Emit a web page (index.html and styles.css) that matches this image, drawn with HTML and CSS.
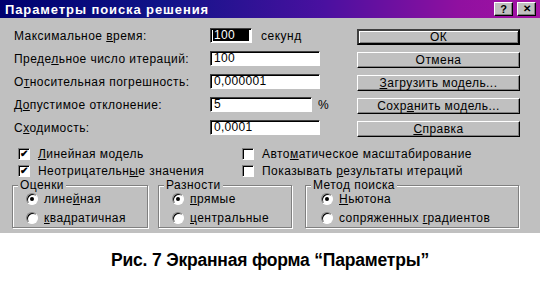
FILE: index.html
```html
<!DOCTYPE html>
<html lang="ru">
<head>
<meta charset="utf-8">
<title>Параметры поиска решения</title>
<link rel="stylesheet" href="styles.css">
</head>
<body>
<div class="dialog">
  <div class="titlebar">
    <span class="title">Параметры поиска решения</span>
    <div class="tbtns">
      <span class="tbtn">?</span>
      <span class="tbtn close">✕</span>
    </div>
  </div>
  <div class="content">
    <div class="top">
      <div class="fields">
        <div class="row">
          <span class="label">Максимальное <u>в</u>ремя:</span>
          <span class="input short sel"><span class="seltext">100</span></span>
          <span class="unit">секунд</span>
        </div>
        <div class="row">
          <span class="label">Преде<u>л</u>ьное число итераций:</span>
          <span class="input">100</span>
        </div>
        <div class="row">
          <span class="label">О<u>т</u>носительная погрешность:</span>
          <span class="input">0,000001</span>
        </div>
        <div class="row">
          <span class="label">Д<u>о</u>пустимое отклонение:</span>
          <span class="input mid">5</span>
          <span class="unit pct">%</span>
        </div>
        <div class="row">
          <span class="label">С<u>х</u>одимость:</span>
          <span class="input">0,0001</span>
        </div>
      </div>
      <div class="buttons">
        <span class="btn default">ОК</span>
        <span class="btn">Отмена</span>
        <span class="btn"><u>З</u>агрузить модель...</span>
        <span class="btn">Сохр<u>а</u>нить модель...</span>
        <span class="btn"><u>С</u>правка</span>
      </div>
    </div>
    <div class="checks">
      <div class="check"><span class="box on">✔</span><span><u>Л</u>инейная модель</span></div>
      <div class="check"><span class="box"></span><span>Авто<u>м</u>атическое масштабирование</span></div>
      <div class="check"><span class="box on">✔</span><span>Неотрицательн<u>ы</u>е значения</span></div>
      <div class="check"><span class="box"></span><span>Показывать <u>р</u>езультаты итераций</span></div>
    </div>
    <div class="groups">
      <div class="group g1">
        <span class="legend">Оценки</span>
        <div class="radio"><span class="dot on"></span><span>лине<u>й</u>ная</span></div>
        <div class="radio"><span class="dot"></span><span><u>к</u>вадратичная</span></div>
      </div>
      <div class="group g2">
        <span class="legend">Разности</span>
        <div class="radio"><span class="dot on"></span><span><u>п</u>рямые</span></div>
        <div class="radio"><span class="dot"></span><span><u>ц</u>ентральные</span></div>
      </div>
      <div class="group g3">
        <span class="legend">Метод поиска</span>
        <div class="radio"><span class="dot on"></span><span><u>Н</u>ьютона</span></div>
        <div class="radio"><span class="dot"></span><span>сопряженных <u>г</u>радиентов</span></div>
      </div>
    </div>
  </div>
</div>
<div class="caption">Рис. 7 Экранная форма “Параметры”</div>
</body>
</html>
```
FILE: styles.css
```css
* { box-sizing: border-box; }
html, body { margin: 0; padding: 0; background: #fff; }
body {
  width: 540px;
  height: 288px;
  overflow: hidden;
  font-family: "Liberation Sans", Arial, sans-serif;
  font-size: 12px;
  color: #000;
}
u { text-decoration: underline; text-underline-offset: 1px; }

.dialog {
  width: 540px;
  height: 233px;
  background: #c0c0c0;
  display: flex;
  flex-direction: column;
}

.titlebar {
  height: 18px;
  background: linear-gradient(90deg, #00006e 0%, #101488 30%, #4a10a0 60%, #9010a0 85%, #a412a4 100%);
  display: flex;
  align-items: center;
  justify-content: space-between;
  padding: 0 4px 0 5px;
}
.title {
  color: #fff;
  font-weight: bold;
  font-size: 13px;
  letter-spacing: 0.9px;
}
.tbtns { display: flex; gap: 4px; }
.tbtn {
  width: 19px;
  height: 14px;
  background: #c0c0c0;
  border: 1px solid;
  border-color: #fff #000 #000 #fff;
  box-shadow: inset -1px -1px 0 #808080;
  font-size: 11px;
  font-weight: bold;
  line-height: 12px;
  text-align: center;
}
.tbtn.close { font-size: 10px; }

.content {
  padding: 10px 20px 0 14px;
  display: flex;
  flex-direction: column;
}

.top { display: flex; justify-content: space-between; }
.fields { display: flex; flex-direction: column; gap: 8px; }
.row { display: flex; align-items: center; height: 15px; }
.label { width: 196px; letter-spacing: 0.45px; }
.input {
  width: 110px;
  height: 15px;
  background: #fff;
  border: 1px solid;
  border-color: #404040 #fff #fff #404040;
  box-shadow: inset 1px 1px 0 #000;
  padding: 0 3px;
  line-height: 13px;
  letter-spacing: 0.3px;
}
.input.short { width: 42px; }
.input.mid { width: 102px; }
.input.sel { padding: 1px 2px; }
.seltext { display: block; background: #000; color: #fff; line-height: 11px; height: 11px; padding: 0 1px; letter-spacing: 0.3px; }
.unit { margin-left: 9px; letter-spacing: 0.5px; }
.unit.pct { margin-left: 6px; }

.buttons { display: flex; flex-direction: column; gap: 7px; padding-top: 1px; }
.btn {
  width: 163px;
  height: 16px;
  border: 1px solid;
  border-color: #fff #000 #000 #fff;
  box-shadow: inset -1px -1px 0 #808080;
  text-align: center;
  line-height: 14px;
  letter-spacing: 0.45px;
}
.btn.default {
  border: 2px solid #000;
  border-top-color: #404040;
  border-left-color: #404040;
  box-shadow: inset 1px 1px 0 #fff, inset -1px -1px 0 #808080;
  line-height: 12px;
}

.checks {
  display: grid;
  grid-template-columns: 224px 1fr;
  row-gap: 5px;
  padding: 11px 0 0 4px;
}
.check { display: flex; align-items: center; height: 12px; letter-spacing: 0.45px; }
.box {
  width: 12px;
  height: 12px;
  background: #fff;
  border: 1px solid;
  border-color: #808080 #fff #fff #808080;
  box-shadow: inset 1px 1px 0 #000;
  margin-right: 8px;
  font-size: 10px;
  line-height: 10px;
  text-align: center;
  font-weight: bold;
}

.groups { display: flex; gap: 10px; padding-top: 8px; }
.group {
  position: relative;
  height: 43px;
  border: 1px solid #808080;
  box-shadow: 1px 1px 0 #fff, inset 1px 1px 0 #fff;
  padding: 6px 0 0 13px;
  display: flex;
  flex-direction: column;
  gap: 6px;
}
.g1 { width: 136px; margin-left: -2px; }
.g2 { width: 134px; }
.g3 { width: 214px; margin-left: 3px; padding-left: 15px; }
.legend {
  position: absolute;
  top: -8px;
  left: 5px;
  background: #c0c0c0;
  padding: 0 2px;
  letter-spacing: 0.45px;
}
.radio { display: flex; align-items: center; height: 13px; letter-spacing: 0.45px; }
.dot {
  width: 12px;
  height: 12px;
  border-radius: 50%;
  background: #fff;
  border: 1px solid;
  border-color: #808080 #fff #fff #808080;
  box-shadow: inset 1px 1px 0 #000;
  margin-right: 6px;
  position: relative;
}
.dot.on::after {
  content: "";
  position: absolute;
  left: 3px;
  top: 3px;
  width: 4px;
  height: 4px;
  border-radius: 50%;
  background: #000;
}

.caption {
  height: 55px;
  display: flex;
  align-items: center;
  justify-content: center;
  font-weight: bold;
  font-size: 17.5px;
  letter-spacing: -0.2px;
}
```
